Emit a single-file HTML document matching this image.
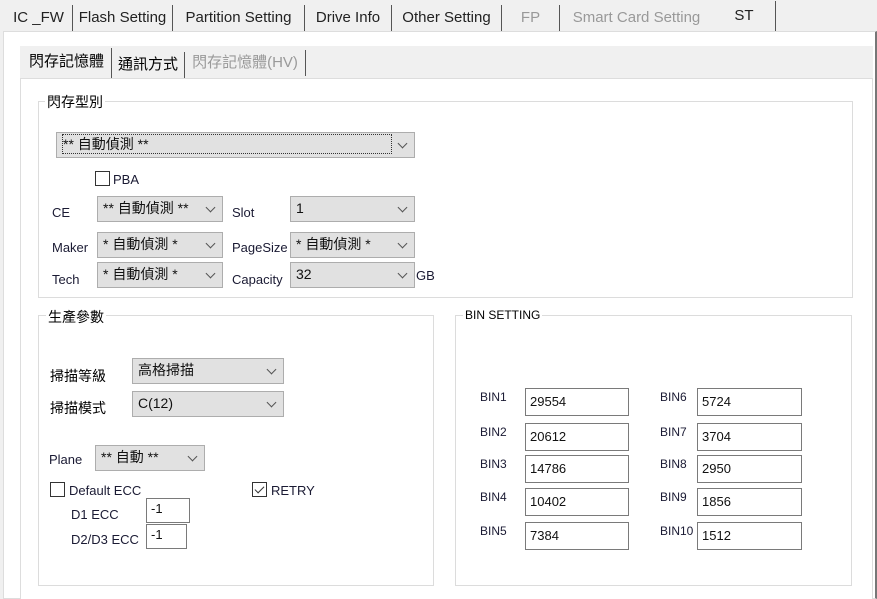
<!DOCTYPE html>
<html><head><meta charset="utf-8"><style>
*{box-sizing:border-box;margin:0;padding:0}
body{width:877px;height:599px;overflow:hidden;background:#f0f0f0;font-family:"Liberation Sans","Noto Sans CJK TC",sans-serif;position:relative;color:#000}
.a{position:absolute;white-space:nowrap}
.tab{position:absolute;top:5px;height:27px;font-size:15px;line-height:26px;text-align:center;color:#222;border-right:1px solid #555}
.dis{color:#999}
.cb{position:absolute;background:#e1e1e1;border:1px solid #adadad;font-size:14px;line-height:22px;padding-left:5px;color:#111}
.cb:after{content:"";position:absolute;right:8px;top:7px;width:6px;height:6px;border-right:1px solid #555;border-bottom:1px solid #555;transform:rotate(45deg)}
.grp{position:absolute;border:1px solid #dcdcdc}
.gt{position:absolute;background:#fff;font-size:14px;padding:0 2px}
.lb{position:absolute;font-size:13px;color:#1a1a33}
.in{position:absolute;background:#fff;border:1px solid #7a7a7a;font-size:13px;padding-left:4px;line-height:26px;color:#111}
.ck{position:absolute;width:15px;height:15px;border:1px solid #333;background:#fff}
</style></head><body>
<div class="tab" style="left:5px;width:68px">IC _FW</div>
<div class="tab" style="left:73px;width:100px">Flash Setting</div>
<div class="tab" style="left:173px;width:132px">Partition Setting</div>
<div class="tab" style="left:305px;width:87px">Drive Info</div>
<div class="tab" style="left:392px;width:110px">Other Setting</div>
<div class="tab dis" style="left:502px;width:58px">FP</div>
<div class="tab dis" style="left:560px;width:153px;border-right:none">Smart Card Setting</div>
<div class="tab" style="left:713px;top:1px;height:31px;width:63px;background:#f0f0f0;border-right:1px solid #555;line-height:30px;font-weight:normal">ST</div>
<div class="a" style="left:3px;top:31px;width:874px;height:568px;background:#fff;border:1px solid #ddd;border-right:2px solid #777"></div>
<div class="a" style="left:20px;top:46px;width:853px;height:32px;background:#f0f0f0"></div>
<div class="a" style="left:22px;top:48px;width:90px;height:31px;background:#f0f0f0;border-right:1px solid #555;font-size:15px;line-height:28px;text-align:center">閃存記憶體</div>
<div class="a" style="left:112px;top:52px;width:73px;height:26px;border-right:1px solid #555;font-size:15px;line-height:26px;text-align:center">通訊方式</div>
<div class="a" style="left:185px;top:50px;width:121px;height:26px;border-right:1px solid #555;font-size:15px;line-height:26px;text-align:center;color:#999">閃存記憶體(HV)</div>
<div class="a" style="left:20px;top:78px;width:853px;height:521px;background:#fff;border:1px solid #ddd;border-bottom:none"></div>

<div class="grp" style="left:38px;top:101px;width:815px;height:197px"></div>
<div class="gt" style="left:45px;top:92px">閃存型別</div>
<div class="cb" style="left:56px;top:132px;width:359px;height:26px"><span style="border:1px dotted #333;display:inline-block;width:330px;line-height:18px;margin-top:1px">** 自動偵測 **</span></div>
<div class="ck" style="left:95px;top:171px"></div><div class="lb" style="left:113px;top:172px">PBA</div>
<div class="lb" style="left:52px;top:205px">CE</div><div class="cb" style="left:97px;top:196px;width:126px;height:26px">** 自動偵測 **</div>
<div class="lb" style="left:232px;top:205px">Slot</div><div class="cb" style="left:290px;top:196px;width:125px;height:26px">1</div>
<div class="lb" style="left:52px;top:240px">Maker</div><div class="cb" style="left:97px;top:232px;width:126px;height:26px">* 自動偵測 *</div>
<div class="lb" style="left:232px;top:240px">PageSize</div><div class="cb" style="left:290px;top:232px;width:125px;height:26px">* 自動偵測 *</div>
<div class="lb" style="left:52px;top:272px">Tech</div><div class="cb" style="left:97px;top:262px;width:126px;height:26px">* 自動偵測 *</div>
<div class="lb" style="left:232px;top:272px">Capacity</div><div class="cb" style="left:290px;top:262px;width:125px;height:26px">32</div>
<div class="lb" style="left:416px;top:268px">GB</div>

<div class="grp" style="left:38px;top:315px;width:396px;height:271px"></div>
<div class="gt" style="left:46px;top:307px">生產參數</div>
<div class="lb" style="left:50px;top:366px;font-size:14px;color:#000">掃描等級</div><div class="cb" style="left:132px;top:358px;width:152px;height:26px">高格掃描</div>
<div class="lb" style="left:50px;top:398px;font-size:14px;color:#000">掃描模式</div><div class="cb" style="left:132px;top:391px;width:152px;height:26px">C(12)</div>
<div class="lb" style="left:49px;top:452px">Plane</div><div class="cb" style="left:95px;top:445px;width:110px;height:26px">** 自動 **</div>
<div class="ck" style="left:50px;top:482px"></div><div class="lb" style="left:69px;top:483px">Default ECC</div>
<div class="ck" style="left:252px;top:482px"><div style="position:absolute;left:4px;top:1px;width:5px;height:9px;border-right:1.5px solid #333;border-bottom:1.5px solid #333;transform:rotate(45deg)"></div></div><div class="lb" style="left:271px;top:483px">RETRY</div>
<div class="lb" style="left:71px;top:507px">D1 ECC</div><div class="in" style="left:146px;top:498px;width:44px;height:25px;line-height:20px">-1</div>
<div class="lb" style="left:71px;top:532px">D2/D3 ECC</div><div class="in" style="left:146px;top:524px;width:41px;height:25px;line-height:20px">-1</div>

<div class="grp" style="left:455px;top:315px;width:397px;height:271px"></div>
<div class="gt" style="left:463px;top:308px;font-size:12px">BIN SETTING</div>
<div class="lb" style="left:480px;top:390px;font-size:12px">BIN1</div><div class="in" style="left:525px;top:388px;width:104px;height:28px">29554</div>
<div class="lb" style="left:480px;top:425px;font-size:12px">BIN2</div><div class="in" style="left:525px;top:423px;width:104px;height:28px">20612</div>
<div class="lb" style="left:480px;top:457px;font-size:12px">BIN3</div><div class="in" style="left:525px;top:455px;width:104px;height:28px">14786</div>
<div class="lb" style="left:480px;top:490px;font-size:12px">BIN4</div><div class="in" style="left:525px;top:488px;width:104px;height:28px">10402</div>
<div class="lb" style="left:480px;top:524px;font-size:12px">BIN5</div><div class="in" style="left:525px;top:522px;width:104px;height:28px">7384</div>
<div class="lb" style="left:660px;top:390px;font-size:12px">BIN6</div><div class="in" style="left:697px;top:388px;width:105px;height:28px">5724</div>
<div class="lb" style="left:660px;top:425px;font-size:12px">BIN7</div><div class="in" style="left:697px;top:423px;width:105px;height:28px">3704</div>
<div class="lb" style="left:660px;top:457px;font-size:12px">BIN8</div><div class="in" style="left:697px;top:455px;width:105px;height:28px">2950</div>
<div class="lb" style="left:660px;top:490px;font-size:12px">BIN9</div><div class="in" style="left:697px;top:488px;width:105px;height:28px">1856</div>
<div class="lb" style="left:660px;top:524px;font-size:12px">BIN10</div><div class="in" style="left:697px;top:522px;width:105px;height:28px">1512</div>
</body></html>
